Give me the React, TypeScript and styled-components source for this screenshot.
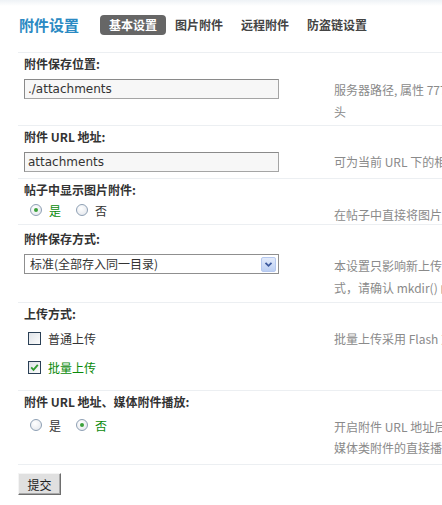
import React from "react";
import styled, { createGlobalStyle } from "styled-components";

const Global = createGlobalStyle`
  html, body { margin: 0; padding: 0; background: #fff; overflow: hidden; }
  body {
    font-family: "DejaVu Sans", "Noto Sans CJK SC", sans-serif;
    font-size: 12px;
    color: #333;
  }
`;

const Page = styled.div`
  width: 442px;
  overflow: hidden;
  background: linear-gradient(#eef2f6 0px, #fff 6px);
`;

const Header = styled.div`
  display: flex;
  align-items: center;
  height: 52px;
  padding-left: 19px;
  padding-bottom: 2px;
  box-sizing: border-box;
`;

const Title = styled.h1`
  margin: 0 21px 0 0;
  font-family: "Noto Sans CJK SC", sans-serif;
  font-size: 15px;
  line-height: 20px;
  font-weight: 700;
  color: #2b8ac3;
`;

const Tabs = styled.div`
  display: flex;
`;

const Tab = styled.span<{ $active?: boolean }>`
  display: inline-block;
  padding: 0 9px;
  height: 20px;
  line-height: 20px;
  border-radius: 4px;
  font-family: "Noto Sans CJK SC", sans-serif;
  font-size: 12px;
  font-weight: 700;
  white-space: nowrap;
  color: ${(p) => (p.$active ? "#fff" : "#444")};
  background: ${(p) => (p.$active ? "#666" : "transparent")};
`;

const Table = styled.div`
  margin-left: 18px;
  width: 760px;
`;

const Section = styled.div`
  border-top: 1px solid #eceff2;
`;

const Label = styled.div<{ $pt?: number }>`
  padding: ${(p) => p.$pt ?? 0}px 0 0 6px;
  height: 21px;
  line-height: 21px;
  font-family: "Noto Sans CJK SC", sans-serif;
  font-weight: 700;
  font-size: 12px;
  color: #333;
  white-space: nowrap;
`;

const Row = styled.div`
  display: grid;
  grid-template-columns: 310px 1fr;
  align-items: start;
  padding-left: 6px;
`;

const Cell = styled.div<{ $pt: number; $pb: number }>`
  padding: ${(p) => p.$pt}px 0 ${(p) => p.$pb}px 0;
`;

const Tip = styled.div<{ $pt: number; $lh?: number }>`
  padding-top: ${(p) => p.$pt}px;
  margin-bottom: -40px;
  line-height: ${(p) => p.$lh ?? 22}px;
  font-family: "Noto Sans CJK SC", sans-serif;
  font-size: 12px;
  color: #8a8a8a;
  white-space: nowrap;
`;

const TextInput = styled.input`
  display: block;
  box-sizing: border-box;
  width: 255px;
  height: 20px;
  margin: 0;
  padding: 0 3px;
  border: 1px solid #a5a5a5;
  border-top-color: #8a8a8a;
  border-left-color: #8a8a8a;
  background: #f7f7f7;
  font-family: "DejaVu Sans", sans-serif;
  font-size: 12px;
  color: #333;
  outline: none;
`;

const SelectBox = styled.div`
  display: flex;
  align-items: center;
  box-sizing: border-box;
  width: 255px;
  height: 20px;
  border: 1px solid #8f8f8f;
  background: #fff;
  padding: 0 2px 0 5px;
`;

const SelectValue = styled.span`
  flex: 1;
  font-family: "Noto Sans CJK SC", sans-serif;
  font-size: 12px;
  line-height: 18px;
  color: #333;
`;

const SelectArrow = styled.span`
  display: flex;
  align-items: center;
  justify-content: center;
  width: 15px;
  height: 15px;
  border-radius: 2px;
  background: linear-gradient(#e3ebfb, #bccff3);
  border: 1px solid #b5c8ef;
  box-sizing: border-box;
`;

const Choices = styled.div<{ $gap: number; $dir: "row" | "column"; $pl: number }>`
  display: flex;
  flex-direction: ${(p) => p.$dir};
  gap: ${(p) => p.$gap}px;
  padding-left: ${(p) => p.$pl}px;
`;

const Choice = styled.span<{ $on?: boolean }>`
  display: inline-flex;
  align-items: center;
  gap: 7px;
  height: 16px;
  font-family: "Noto Sans CJK SC", sans-serif;
  font-size: 12px;
  color: ${(p) => (p.$on ? "#0a8a0a" : "#333")};
`;

const RadioDot = styled.span<{ $on?: boolean }>`
  position: relative;
  width: 12px;
  height: 12px;
  box-sizing: border-box;
  border-radius: 50%;
  border: 1px solid #8ea0b4;
  background: radial-gradient(circle at 40% 35%, #fff 0%, #e6e9ee 80%);
  &::after {
    content: "";
    display: ${(p) => (p.$on ? "block" : "none")};
    position: absolute;
    left: 3px;
    top: 3px;
    width: 4px;
    height: 4px;
    border-radius: 50%;
    background: #3aa03a;
  }
`;

const CheckSquare = styled.span`
  display: inline-flex;
  align-items: center;
  justify-content: center;
  width: 13px;
  height: 13px;
  box-sizing: border-box;
  border: 1px solid #2a3f55;
  background: linear-gradient(135deg, #dfe3e8, #fbfbfb);
`;

const Actions = styled.div`
  padding-top: 8px;
  border-top: 1px solid #eceff2;
  margin-left: 18px;
`;

const Submit = styled.button`
  width: 43px;
  height: 22px;
  padding: 0;
  font-family: "Noto Sans CJK SC", sans-serif;
  font-size: 12px;
  color: #222;
  background: #e0e0e0;
  border: 1px solid;
  border-color: #f4f4f4 #6e6e6e #6e6e6e #f4f4f4;
  box-shadow: inset -1px -1px 0 #a8a8a8;
`;

const Radio = ({ on, text }: { on?: boolean; text: string }) => (
  <Choice $on={on}>
    <RadioDot $on={on} />
    {text}
  </Choice>
);

const Check = ({ on, text }: { on?: boolean; text: string }) => (
  <Choice $on={on}>
    <CheckSquare>
      {on && (
        <svg width="9" height="9" viewBox="0 0 9 9">
          <path d="M1.2 4.4 L3.5 6.8 L7.8 1.8" fill="none" stroke="#2f9b2f" strokeWidth="1.8" />
        </svg>
      )}
    </CheckSquare>
    {text}
  </Choice>
);

const Lines = ({ lines }: { lines: string[] }) => (
  <>
    {lines.map((l, i) => (
      <React.Fragment key={i}>
        {i > 0 && <br />}
        {l}
      </React.Fragment>
    ))}
  </>
);

export default function App() {
  return (
    <Page>
      <Global />
      <Header>
        <Title>附件设置</Title>
        <Tabs>
          <Tab $active>基本设置</Tab>
          <Tab>图片附件</Tab>
          <Tab>远程附件</Tab>
          <Tab>防盗链设置</Tab>
        </Tabs>
      </Header>

      <Table>
        <Section>
          <Label>附件保存位置:</Label>
          <Row>
            <Cell $pt={5} $pb={26}>
              <TextInput defaultValue="./attachments" />
            </Cell>
            <Tip $pt={5}>
              <Lines
                lines={[
                  "服务器路径, 属性 777, 必须为 web 可访问到的目录, 结尾不加 \"/\", 相对目录务必以 ./ 开",
                  "头",
                ]}
              />
            </Tip>
          </Row>
        </Section>

        <Section>
          <Label>附件 URL 地址:</Label>
          <Row>
            <Cell $pt={5} $pb={6}>
              <TextInput defaultValue="attachments" />
            </Cell>
            <Tip $pt={4}>可为当前 URL 下的相对地址或 http:// 开头的绝对地址, 结尾不加 "/"</Tip>
          </Row>
        </Section>

        <Section>
          <Label>帖子中显示图片附件:</Label>
          <Row>
            <Cell $pt={2} $pb={6}>
              <Choices $dir="row" $gap={15} $pl={6}>
                <Radio on text="是" />
                <Radio text="否" />
              </Choices>
            </Cell>
            <Tip $pt={4}>在帖子中直接将图片或动画附件显示出来, 而不需要点击附件链接</Tip>
          </Row>
        </Section>

        <Section>
          <Label $pt={3}>附件保存方式:</Label>
          <Row>
            <Cell $pt={5} $pb={28}>
              <SelectBox>
                <SelectValue>标准(全部存入同一目录)</SelectValue>
                <SelectArrow>
                  <svg width="9" height="7" viewBox="0 0 9 7">
                    <path d="M1.5 1.8 L4.5 4.8 L7.5 1.8" fill="none" stroke="#3d5a9e" strokeWidth="1.8" />
                  </svg>
                </SelectArrow>
              </SelectBox>
            </Cell>
            <Tip $pt={6}>
              <Lines
                lines={[
                  "本设置只影响新上传的附件, 设置更改之前的附件仍存放在原来位置. 如使用非标准的附件存放方",
                  "式，请确认 mkdir() 函数可正常使用, 否则会出现附件无法保存的问题",
                ]}
              />
            </Tip>
          </Row>
        </Section>

        <Section>
          <Label>上传方式:</Label>
          <Row>
            <Cell $pt={6} $pb={15}>
              <Choices $dir="column" $gap={13} $pl={4}>
                <Check text="普通上传" />
                <Check on text="批量上传" />
              </Choices>
            </Cell>
            <Tip $pt={4}>批量上传采用 Flash 方式上传, 可以一次选择多个附件上传</Tip>
          </Row>
        </Section>

        <Section>
          <Label>附件 URL 地址、媒体附件播放:</Label>
          <Row>
            <Cell $pt={5} $pb={31}>
              <Choices $dir="row" $gap={15} $pl={6}>
                <Radio text="是" />
                <Radio on text="否" />
              </Choices>
            </Cell>
            <Tip $pt={4} $lh={21}>
              <Lines
                lines={[
                  "开启附件 URL 地址后，站外可以通过附件地址直接访问附件，并支持",
                  "媒体类附件的直接播放",
                ]}
              />
            </Tip>
          </Row>
        </Section>
      </Table>

      <Actions>
        <Submit type="button">提交</Submit>
      </Actions>
      <div style={{ height: 20 }} />
    </Page>
  );
}
